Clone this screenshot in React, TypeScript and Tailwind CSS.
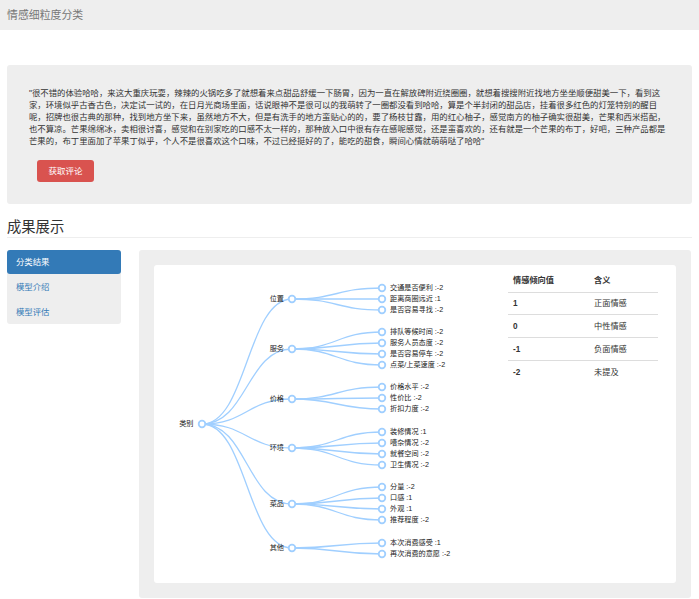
import React from 'react';

const FONT = "font-['Liberation_Sans','Noto_Sans_CJK_SC',sans-serif]";

const REVIEW =
  '"很不错的体验哈哈，来这大重庆玩耍，辣辣的火锅吃多了就想着来点甜品舒缓一下肠胃，因为一直在解放碑附近绕圈圈，就想着搜搜附近找地方坐坐顺便甜美一下，看到这家，环境似乎古香古色，决定试一试的，在日月光商场里面，话说眼神不是很可以的我萌转了一圈都没看到哈哈，算是个半封闭的甜品店，挂着很多红色的灯笼特别的醒目呢，招牌也很古典的那种，找到地方坐下来，虽然地方不大，但是有洗手的地方蛮贴心的的，要了杨枝甘露，用的红心柚子，感觉南方的柚子确实很甜美，芒果和西米搭配，也不算凉。芒果绵绵冰，卖相很讨喜，感觉和在别家吃的口感不太一样的，那种放入口中很有存在感呢感觉，还是蛮喜欢的，还有就是一个芒果的布丁，好吧，三种产品都是芒果的，布丁里面加了苹果丁似乎，个人不是很喜欢这个口味，不过已经挺好的了，能吃的甜食，瞬间心情就萌萌哒了哈哈"';

// page coordinates of the chart, the svg sits at card origin (154,265)
const TREE = [
  { name: '位置', y: 34, leaves: [['交通是否便利', '-2', 23], ['距离商圈远近', '1', 34], ['是否容易寻找', '-2', 45]] },
  { name: '服务', y: 84, leaves: [['排队等候时间', '-2', 67], ['服务人员态度', '-2', 78], ['是否容易停车', '-2', 89], ['点菜/上菜速度', '-2', 100]] },
  { name: '价格', y: 134, leaves: [['价格水平', '-2', 122], ['性价比', '-2', 133], ['折扣力度', '-2', 144]] },
  { name: '环境', y: 183, leaves: [['装修情况', '1', 167], ['嘈杂情况', '-2', 178], ['就餐空间', '-2', 189], ['卫生情况', '-2', 200]] },
  { name: '菜品', y: 239, leaves: [['分量', '-2', 222], ['口感', '1', 233], ['外观', '1', 244], ['推荐程度', '-2', 255]] },
  { name: '其他', y: 283, leaves: [['本次消费感受', '1', 278], ['再次消费的意愿', '-2', 289]] },
] as const;

const ROOT = { x: 48, y: 159 };
const MID_X = 138;
const LEAF_X = 228;

function link(x0: number, y0: number, x1: number, y1: number) {
  const mx = (x0 + x1) / 2;
  return `M${x0} ${y0}C${mx} ${y0} ${mx} ${y1} ${x1} ${y1}`;
}

function Node({ x, y }: { x: number; y: number }) {
  return <circle cx={x} cy={y} r={3.3} fill="#fff" stroke="#a0cfff" strokeWidth={1.8} />;
}

function TreeChart() {
  return (
    <svg width={350} height={318} className="shrink-0">
      <g fill="none" stroke="#a0cfff" strokeWidth={1.3}>
        {TREE.map((group) => (
          <React.Fragment key={group.name}>
            <path d={link(ROOT.x, ROOT.y, MID_X, group.y)} />
            {group.leaves.map((leaf) => (
              <path key={leaf[0]} d={link(MID_X, group.y, LEAF_X, leaf[2])} />
            ))}
          </React.Fragment>
        ))}
      </g>
      <g fill="#222" fontSize={7.15}>
        <text x={39.5} y={ROOT.y} textAnchor="end" dominantBaseline="central">类别</text>
        <Node x={ROOT.x} y={ROOT.y} />
        {TREE.map((group) => (
          <React.Fragment key={group.name}>
            <text x={130} y={group.y} textAnchor="end" dominantBaseline="central">{group.name}</text>
            <Node x={MID_X} y={group.y} />
            {group.leaves.map((leaf) => (
              <React.Fragment key={leaf[0]}>
                <Node x={LEAF_X} y={leaf[2]} />
                <text x={236} y={leaf[2]} dominantBaseline="central">{`${leaf[0]} :${leaf[1]}`}</text>
              </React.Fragment>
            ))}
          </React.Fragment>
        ))}
      </g>
    </svg>
  );
}

const LEGEND = [
  ['1', '正面情感'],
  ['0', '中性情感'],
  ['-1', '负面情感'],
  ['-2', '未提及'],
];

function Legend() {
  return (
    <table className="mt-[5px] ml-[4px] w-[150px] h-fit table-fixed border-collapse text-[8.2px] text-[#333]">
      <thead>
        <tr className="h-[22px] border-b border-[#ddd] text-left">
          <th className="w-[86px] pl-[5px] font-bold">情感倾向值</th>
          <th className="font-bold">含义</th>
        </tr>
      </thead>
      <tbody>
        {LEGEND.map(([value, meaning], i) => (
          <tr key={value} className={i < 3 ? 'h-[22.7px] border-b border-[#ddd]' : 'h-[22.7px]'}>
            <td className="pl-[5px] pt-[2px] font-bold">{value}</td>
            <td className="pt-[2px]">{meaning}</td>
          </tr>
        ))}
      </tbody>
    </table>
  );
}

export default function App() {
  return (
    <div className={`${FONT} w-[699px] h-[599px] overflow-hidden bg-white text-[#333]`}>
      <div className="flex h-[30px] items-center bg-[#eee] pl-[7px] text-[10.9px] text-[#777]">情感细粒度分类</div>

      <div className="mx-[7px] mt-[35px] h-[139px] rounded-[3px] bg-[#eee] pl-[22px] pr-[22px] pt-[22px]">
        <p className="text-[8.4px] leading-[12px] text-[#333]">{REVIEW}</p>
        <button className="ml-[8px] mt-[13px] h-[22px] w-[57px] rounded-[3px] bg-[#d9534f] text-[8.5px] text-white">
          获取评论
        </button>
      </div>

      <div className="mx-[7px] mt-[14px] h-[20px] border-b border-[#eee] text-[14.3px] leading-[18px]">成果展示</div>

      <div className="mx-[7px] mt-[12px] flex gap-[18px]">
        <nav className="h-[74px] w-[114px] rounded-[3px] bg-[#eee] text-[8.4px] text-[#337ab7]">
          <div className="flex h-[24px] items-center rounded-[3px] bg-[#337ab7] pl-[9px] text-white">分类结果</div>
          <div className="flex h-[25px] items-center pl-[9px] pt-[1px]">模型介绍</div>
          <div className="flex h-[25px] items-center pl-[9px] pt-[1px]">模型评估</div>
        </nav>
        <div className="h-[348px] w-[552px] rounded-[3px] bg-[#eee] p-[15px]">
          <div className="flex h-[318px] rounded-[3px] bg-white">
            <TreeChart />
            <Legend />
          </div>
        </div>
      </div>
    </div>
  );
}
